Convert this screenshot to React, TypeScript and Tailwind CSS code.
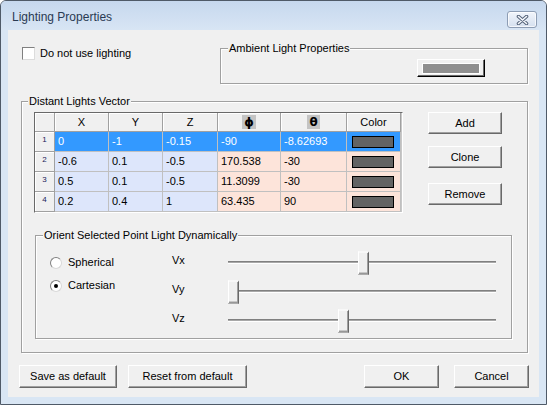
import type { ReactNode } from 'react';

type Row = { x: string; y: string; z: string; phi: string; theta: string; selected?: boolean };

const rows: Row[] = [
  { x: '0', y: '-1', z: '-0.15', phi: '-90', theta: '-8.62693', selected: true },
  { x: '-0.6', y: '0.1', z: '-0.5', phi: '170.538', theta: '-30' },
  { x: '0.5', y: '0.1', z: '-0.5', phi: '11.3099', theta: '-30' },
  { x: '0.2', y: '0.4', z: '1', phi: '63.435', theta: '90' },
];

const sliders = [
  { label: 'Vx', left: 130 },
  { label: 'Vy', left: 0 },
  { label: 'Vz', left: 110 },
];

function Btn({ children, className = '' }: { children: ReactNode; className?: string }) {
  return (
    <button
      className={`flex items-center justify-center border border-t-white border-l-white border-r-[#696969] border-b-[#696969] bg-[#f0f0f0] text-[11px] leading-none text-black shadow-[inset_-1px_-1px_0_#a0a0a0] ${className}`}
    >
      {children}
    </button>
  );
}

function Legend({ text, className = '' }: { text: string; className?: string }) {
  return (
    <span className={`-mt-[7px] block w-fit bg-[#f0f0f0] px-[1px] text-[11px] leading-[13px] text-black ${className}`}>
      {text}
    </span>
  );
}

function HeadCell({ children }: { children?: ReactNode }) {
  return (
    <div className="flex items-center justify-center border-r border-b border-[#a0a0a0] bg-[#f0f0f0] text-[11px] leading-none shadow-[inset_1px_1px_0_#fff]">
      {children}
    </div>
  );
}

function Greek({ ch }: { ch: string }) {
  return (
    <span className="bg-[#c4c4c4] px-[2px] font-['DejaVu_Sans',sans-serif] text-[12px] font-bold leading-[14px]">
      {ch}
    </span>
  );
}

function Cell({ text, tone, selected }: { text?: string; tone: 'blue' | 'pink'; selected?: boolean }) {
  const bg = selected ? 'bg-[#3399ff] text-white' : tone === 'blue' ? 'bg-[#dde6fb] text-black' : 'bg-[#fde4da] text-black';
  return (
    <div className={`flex items-center border-r border-b border-[#c0c0c0] pl-[3px] text-[11px] leading-none ${bg}`}>
      {text}
    </div>
  );
}

export default function App() {
  return (
    <div className="h-[405px] w-[547px] bg-white font-['Liberation_Sans',Arial,sans-serif]">
      <div className="flex h-full w-full flex-col rounded-t-[6px] border border-[#4f5a68] bg-[#d9e6f4]">
        {/* title bar */}
        <div className="flex h-[29px] shrink-0 items-start justify-between rounded-t-[5px] bg-linear-to-b from-[#c6d8ee] to-[#d8e5f4] pl-[11px] pr-[9px]">
          <span className="mt-[9px] text-[12px] leading-[15px] text-[#2a3a52]">Lighting Properties</span>
          <div className="mt-[10px] flex h-[17px] w-[30px] items-center justify-center rounded-[3px] border border-[#8d9db4] bg-linear-to-b from-[#f1f5fb] to-[#d5e0ef] shadow-[inset_0_0_0_1px_rgba(255,255,255,0.7)]">
            <svg width="13" height="10" viewBox="0 0 13 10">
              <path d="M2.5 1.5 L10.5 8.5 M10.5 1.5 L2.5 8.5" stroke="#56647a" strokeWidth="3.6" strokeLinecap="round" />
              <path d="M2.5 1.5 L10.5 8.5 M10.5 1.5 L2.5 8.5" stroke="#f4f7fb" strokeWidth="1.6" strokeLinecap="round" />
            </svg>
          </div>
        </div>

        {/* client area */}
        <div className="mx-[7px] mb-[7px] flex flex-1 flex-col bg-[#f0f0f0] pl-[11px] pr-[10px] text-[11px] text-black">
          <div className="mt-[18px] flex items-start">
            <label className="ml-[3px] -mt-[1px] flex items-center gap-[5px]">
              <span className="h-[13px] w-[13px] border border-t-[#808080] border-l-[#808080] border-r-[#dcdcdc] border-b-[#dcdcdc] bg-white" />
              <span className="leading-[13px]">Do not use lighting</span>
            </label>

            <div className="ml-auto mr-[1px] flex h-[36px] w-[308px] flex-col border border-[#a0a0a0] shadow-[1px_1px_0_#fff,inset_1px_1px_0_#fff]">
              <Legend text="Ambient Light Properties" className="ml-[7px]" />
              <div className="ml-[196px] mt-[4px] flex h-[18px] w-[68px] items-center justify-center border border-t-white border-l-white border-r-black border-b-black bg-[#f0f0f0] shadow-[inset_-1px_-1px_0_#696969]">
                <div className="h-[11px] w-[58px] border border-white bg-[#8f8f8f]" />
              </div>
            </div>
          </div>

          {/* distant lights */}
          <div className="ml-[2px] mr-[1px] mt-[17px] flex h-[252px] flex-col border border-[#a0a0a0] shadow-[1px_1px_0_#fff,inset_1px_1px_0_#fff]">
            <Legend text="Distant Lights Vector" className="ml-[6px]" />
            <div className="ml-[12px] mt-[4px] flex items-start">
              <div className="flex h-[101px] w-[369px] border border-t-[#696969] border-l-[#696969] border-r-white border-b-white bg-white">
                <div className="grid grid-cols-[20px_54px_54px_55px_63px_66px_54px] grid-rows-[19px_20px_20px_20px_20px]">
                  <HeadCell />
                  <HeadCell>X</HeadCell>
                  <HeadCell>Y</HeadCell>
                  <HeadCell>Z</HeadCell>
                  <HeadCell>
                    <Greek ch="ϕ" />
                  </HeadCell>
                  <HeadCell>
                    <Greek ch="θ" />
                  </HeadCell>
                  <HeadCell>Color</HeadCell>
                  {rows.map((r, i) => (
                    <div key={i} className="contents">
                      <div className="flex justify-center border-r border-b border-[#a0a0a0] bg-[#f0f0f0] pt-[4px] text-[8px] leading-none text-[#20205a] shadow-[inset_1px_1px_0_#fff]">
                        {i + 1}
                      </div>
                      <Cell text={r.x} tone="blue" selected={r.selected} />
                      <Cell text={r.y} tone="blue" selected={r.selected} />
                      <Cell text={r.z} tone="blue" selected={r.selected} />
                      <Cell text={r.phi} tone="pink" selected={r.selected} />
                      <Cell text={r.theta} tone="pink" selected={r.selected} />
                      <div
                        className={`flex items-center border-r border-b border-[#c0c0c0] pl-[5px] ${r.selected ? 'bg-[#3399ff]' : 'bg-[#fde4da]'}`}
                      >
                        <div className="h-[12px] w-[42px] border border-black bg-[#636363]" />
                      </div>
                    </div>
                  ))}
                </div>
                <div className="w-[1px] border-r border-[#c8c8c8]" />
              </div>

              <div className="ml-[25px] flex w-[74px] flex-col">
                <Btn className="h-[22px] w-full">Add</Btn>
                <Btn className="mt-[12px] h-[22px] w-full">Clone</Btn>
                <Btn className="mt-[15px] h-[22px] w-full">Remove</Btn>
              </div>
            </div>

            {/* orient group */}
            <div className="ml-[13px] mr-[15px] mt-[22px] flex h-[104px] flex-col border border-[#a0a0a0] shadow-[1px_1px_0_#fff,inset_1px_1px_0_#fff]">
              <Legend text="Orient Selected Point Light Dynamically" className="ml-[7px]" />
              <div className="flex">
                <div className="ml-[14px] mt-[14px] flex w-[122px] flex-col gap-[10px]">
                  {['Spherical', 'Cartesian'].map((t) => (
                    <label key={t} className="flex h-[13px] items-center gap-[6px]">
                      <span className="flex h-[12px] w-[12px] items-center justify-center rounded-full border border-t-[#808080] border-l-[#808080] border-r-[#d8d8d8] border-b-[#d8d8d8] bg-white">
                        {t === 'Cartesian' && <span className="h-[4px] w-[4px] rounded-full bg-black" />}
                      </span>
                      <span className="leading-[13px]">{t}</span>
                    </label>
                  ))}
                </div>
                <div className="mt-[6px] flex flex-col">
                  {sliders.map((s) => (
                    <div key={s.label} className="flex h-[29px] items-center">
                      <span className="w-[56px] pb-[5px] leading-[13px]">{s.label}</span>
                      <div className="relative flex h-full w-[268px] items-center">
                        <div className="h-[3px] w-full border-t border-b border-t-[#808080] border-b-white bg-[#a8a8a8]" />
                        <div
                          className="absolute top-1/2 h-[23px] w-[11px] -translate-y-1/2 border border-t-white border-l-white border-r-[#696969] border-b-[#696969] bg-[#f0f0f0] shadow-[inset_-1px_-1px_0_#a0a0a0]"
                          style={{ left: s.left }}
                        />
                      </div>
                    </div>
                  ))}
                </div>
              </div>
            </div>
          </div>

          {/* bottom buttons */}
          <div className="mt-[12px] flex h-[23px]">
            <Btn className="w-[98px]">Save as default</Btn>
            <Btn className="ml-[11px] w-[119px]">Reset from default</Btn>
            <Btn className="ml-auto w-[75px]">OK</Btn>
            <Btn className="ml-[15px] w-[75px]">Cancel</Btn>
          </div>
        </div>
      </div>
    </div>
  );
}
